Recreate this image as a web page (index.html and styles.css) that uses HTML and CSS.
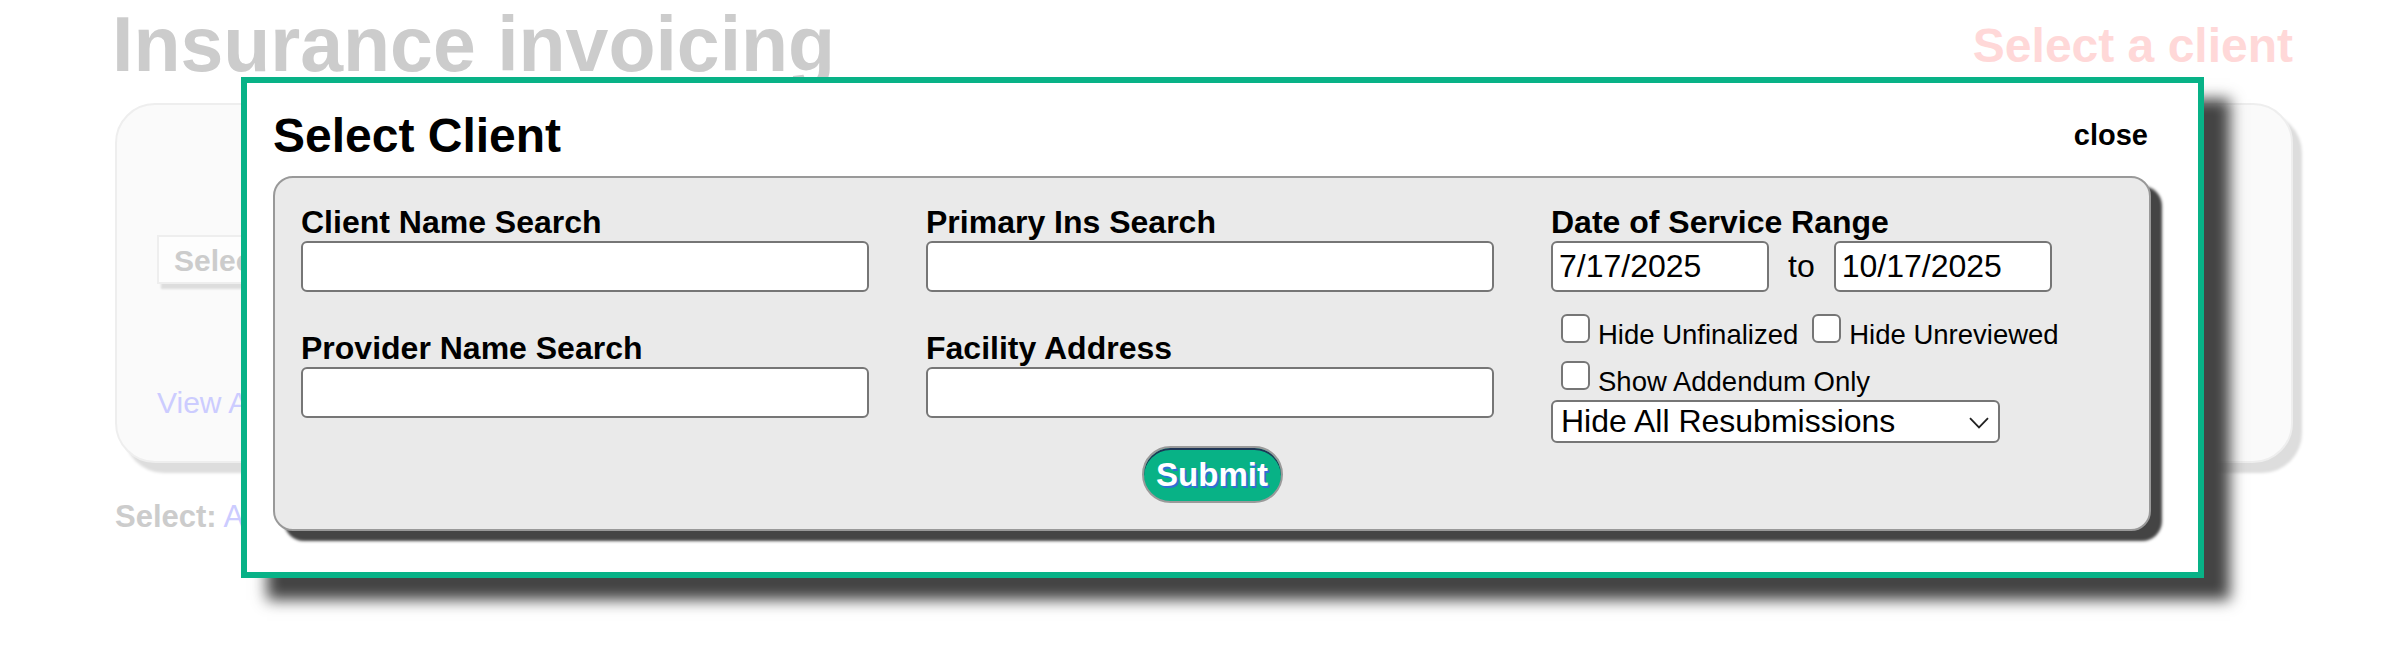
FILE: index.html
```html
<!DOCTYPE html>
<html lang="en">
<head>
<meta charset="utf-8">
<title>Insurance invoicing</title>
<link rel="stylesheet" href="styles.css">
</head>
<body>
<div class="page">
  <header class="page-header">
    <h1 class="page-title">Insurance invoicing</h1>
    <div class="client-prompt">Select a client</div>
  </header>
  <section class="bg-card">
    <div class="bg-select">Select a client...</div>
    <a class="bg-link" href="#">View All Invoices</a>
  </section>
  <div class="bg-filter"><span class="bg-filter-label">Select:</span> <a class="bg-filter-link" href="#">All</a></div>
</div>

<div class="modal">
  <div class="modal-header">
    <h2 class="modal-title">Select Client</h2>
    <a class="modal-close" href="#">close</a>
  </div>
  <form class="search-panel">
    <div class="search-grid">
      <div class="search-col">
        <label class="field">
          <span class="field-label">Client Name Search</span>
          <input class="text-input" type="text">
        </label>
        <label class="field">
          <span class="field-label">Provider Name Search</span>
          <input class="text-input" type="text">
        </label>
      </div>
      <div class="search-col">
        <label class="field">
          <span class="field-label">Primary Ins Search</span>
          <input class="text-input" type="text">
        </label>
        <label class="field">
          <span class="field-label">Facility Address</span>
          <input class="text-input" type="text">
        </label>
      </div>
      <div class="search-col">
        <span class="field-label">Date of Service Range</span>
        <div class="date-row">
          <input class="text-input date-input" type="text" value="7/17/2025">
          <span class="date-sep">to</span>
          <input class="text-input date-input" type="text" value="10/17/2025">
        </div>
        <div class="check-line first">
          <label class="check-item"><input class="check-box" type="checkbox"><span class="check-text">Hide Unfinalized</span></label>
          <label class="check-item"><input class="check-box" type="checkbox"><span class="check-text">Hide Unreviewed</span></label>
        </div>
        <div class="check-line second">
          <label class="check-item"><input class="check-box" type="checkbox"><span class="check-text">Show Addendum Only</span></label>
        </div>
        <div class="select-box">
          <span class="select-text">Hide All Resubmissions</span>
          <svg class="select-chevron" width="20" height="12" viewBox="0 0 20 12"><path d="M1 1.2 L10 10.5 L19 1.2" fill="none" stroke="#222" stroke-width="1.8"/></svg>
        </div>
      </div>
    </div>
    <div class="submit-row">
      <button class="submit-btn" type="button">Submit</button>
    </div>
  </form>
</div>
</body>
</html>
```

FILE: styles.css
```css
* { box-sizing: border-box; }

html, body {
  margin: 0;
  padding: 0;
  background: #fff;
}

body {
  font-family: "Liberation Sans", Arial, sans-serif;
  width: 2408px;
  height: 648px;
  overflow: hidden;
  position: relative;
  color: #000;
}

/* ---------- background page ---------- */
.page {
  padding: 0 115px;
}

.page-header {
  display: flex;
  justify-content: space-between;
  align-items: flex-start;
  height: 103px;
}

.page-title {
  margin: 0 0 0 -3px;
  font-size: 77px;
  line-height: 88px;
  font-weight: bold;
  color: #cccccc;
}

.client-prompt {
  margin-top: 18px;
  font-size: 48px;
  line-height: 55px;
  font-weight: bold;
  color: #ffd8d8;
}

.bg-card {
  height: 360px;
  border: 2px solid #eeeeee;
  border-radius: 40px;
  background: #fafafa;
  box-shadow: 9px 10px 3px #dddddd;
  padding: 130px 40px 0 40px;
}

.bg-select {
  width: 420px;
  height: 49px;
  border: 2px solid #eeeeee;
  background: #fdfdfd;
  box-shadow: 4px 5px 2px #dddddd;
  padding-left: 15px;
  font-size: 30px;
  line-height: 47px;
  font-weight: bold;
  color: #cccccc;
}

.bg-link {
  display: block;
  margin-top: 101px;
  font-size: 30px;
  line-height: 35px;
  color: #ccccff;
  text-decoration: none;
}

.bg-filter {
  margin-top: 36px;
  font-size: 31px;
  line-height: 35px;
}

.bg-filter-label {
  font-weight: bold;
  color: #cccccc;
}

.bg-filter-link {
  color: #ccccff;
  text-decoration: none;
}

/* ---------- modal ---------- */
.modal {
  position: absolute;
  left: 241px;
  top: 77px;
  width: 1963px;
  height: 501px;
  border: 6px solid #08b287;
  background: #fff;
  box-shadow: 26px 22px 14px #444444;
  padding: 25px 47px 0 26px;
}

.modal-header {
  display: flex;
  justify-content: space-between;
  align-items: center;
  height: 55px;
  margin-bottom: 13px;
}

.modal-title {
  margin: 0;
  font-size: 48px;
  line-height: 55px;
  font-weight: bold;
}

.modal-close {
  margin-right: 3px;
  font-size: 29px;
  line-height: 33px;
  font-weight: bold;
  color: #000;
  text-decoration: none;
}

.search-panel {
  margin: 0;
  width: 1878px;
  height: 355px;
  border: 2px solid #999999;
  border-radius: 20px;
  background: #eaeaea;
  box-shadow: 11px 10px 3px #444444;
  padding: 26px;
}

.search-grid {
  display: grid;
  grid-template-columns: 568px 568px 1fr;
  column-gap: 57px;
  height: 240px;
}

.search-col {
  display: flex;
  flex-direction: column;
  align-items: flex-start;
}

.field {
  display: block;
}

.field + .field {
  margin-top: 38px;
}

.field-label {
  display: block;
  font-size: 32px;
  line-height: 37px;
  font-weight: bold;
}

.text-input {
  display: block;
  width: 568px;
  height: 51px;
  margin: 0;
  border: 2px solid #767676;
  border-radius: 6px;
  background: #fff;
  padding: 0 6px;
  font-family: "Liberation Sans", Arial, sans-serif;
  font-size: 32px;
  color: #000;
}

.date-row {
  display: flex;
  align-items: center;
  height: 51px;
}

.date-input {
  width: 218px;
}

.date-sep {
  margin: 0 19px;
  font-size: 32px;
  line-height: 37px;
}

.check-line {
  display: flex;
  align-items: flex-end;
  height: 29px;
  padding-left: 5px;
}

.check-line.first {
  margin-top: 22px;
}

.check-line.second {
  margin-top: 18px;
}

.check-item {
  display: flex;
  align-items: flex-end;
  margin-right: 9px;
}

.check-box {
  appearance: none;
  -webkit-appearance: none;
  width: 29px;
  height: 29px;
  margin: 0 8px 0 5px;
  border: 2px solid #767676;
  border-radius: 6px;
  background: #fff;
  flex: none;
}

.check-text {
  font-size: 27.5px;
  line-height: 17px;
  white-space: nowrap;
}

.select-box {
  margin-top: 10px;
  width: 449px;
  height: 43px;
  border: 2px solid #767676;
  border-radius: 6px;
  background: #fff;
  display: flex;
  align-items: center;
  justify-content: space-between;
  padding: 0 9px 0 8px;
}

.select-text {
  font-size: 32px;
  line-height: 37px;
  white-space: nowrap;
}

.select-chevron {
  flex: none;
  margin-top: 2px;
}

.submit-row {
  display: flex;
  justify-content: center;
  margin-top: 2px;
}

.submit-btn {
  width: 141px;
  height: 57px;
  border: 2px solid #9a9a9a;
  border-radius: 29px;
  background: #08b286;
  box-shadow: inset 0 2px 0 #1e3556;
  padding: 0;
  font-family: "Liberation Sans", Arial, sans-serif;
  font-size: 33px;
  font-weight: bold;
  color: #fff;
  text-shadow: 2px 2px 0 #2f6fd6;
  cursor: pointer;
}
```
